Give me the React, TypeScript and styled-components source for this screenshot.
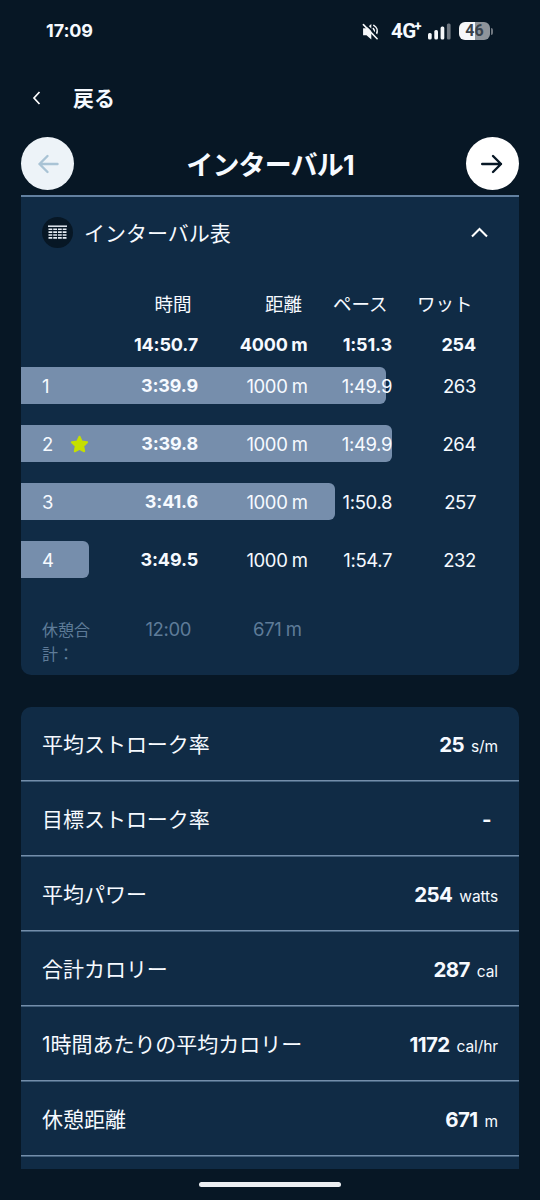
import React from "react";
import styled, { createGlobalStyle } from "styled-components";

const GlobalStyle = createGlobalStyle`
  * { box-sizing: border-box; }
  body {
    margin: 0;
    background: #071725;
    color: #f6faff;
    font-family: Inter, "Noto Sans CJK JP", sans-serif;
  }
`;

const Screen = styled.div`
  width: 540px;
  height: 1200px;
  overflow: hidden;
  display: flex;
  flex-direction: column;
`;

const StatusBar = styled.header`
  height: 60px;
  flex: none;
  padding: 1px 46px 0;
  display: flex;
  align-items: center;
  justify-content: space-between;
`;

const Clock = styled.span`
  font-size: 18px;
  font-weight: 700;
  letter-spacing: -0.1px;
`;

const StatusIcons = styled.div`
  display: flex;
  align-items: center;
  padding-top: 1px;
`;

const Network = styled.span`
  display: flex;
  align-items: flex-start;
  font: 700 20.5px/20px Roboto, sans-serif;
  letter-spacing: -0.6px;
  margin-left: 12px;
  width: 30px;
`;

const Plus = styled.sup`
  font: 900 13px/10px Roboto, sans-serif;
  margin-left: -1px;
`;

const Signal = styled.svg`
  margin-left: 7px;
`;

const Battery = styled.span`
  width: 31px;
  height: 18px;
  margin-left: 8px;
  border-radius: 6px;
  background: linear-gradient(90deg, #f5f7f9 50%, #8e949b 50%);
  color: #39424b;
  font: 700 16px/18px Roboto, sans-serif;
  text-align: center;
`;

const BatteryCap = styled.span`
  width: 2px;
  height: 7px;
  margin: 0 1px;
  border-radius: 0 2px 2px 0;
  background: #6f7780;
`;

const BackBar = styled.nav`
  height: 72px;
  flex: none;
  padding: 3px 0 0 32px;
  display: flex;
  align-items: center;
  gap: 32px;
`;

const BackLabel = styled.span`
  font-size: 21px;
  line-height: 30px;
  font-weight: 700;
  padding-top: 2px;
`;

const TitleBar = styled.div`
  height: 63px;
  flex: none;
  padding: 0 21px;
  display: flex;
  align-items: center;
  justify-content: space-between;
`;

const RoundButton = styled.button<{ $dim?: boolean }>`
  width: 53px;
  height: 53px;
  padding: 0;
  border: 0;
  border-radius: 50%;
  display: grid;
  place-items: center;
  background: ${(p) => (p.$dim ? "#edf3f8" : "#ffffff")};
  color: ${(p) => (p.$dim ? "#a9c3d5" : "#071725")};
`;

const Title = styled.h1`
  margin: 0;
  padding-top: 5px;
  font-size: 27px;
  line-height: 40px;
  font-weight: 700;
  letter-spacing: -0.85px;
`;

const IntervalCard = styled.section`
  flex: none;
  height: 480px;
  margin: 0 21px;
  background: #102b45;
  border-top: 2px solid #6280a0;
  border-radius: 0 0 10px 10px;
  display: flex;
  flex-direction: column;
`;

const CardHeader = styled.div`
  height: 70px;
  padding: 0 31px 0 21px;
  display: flex;
  align-items: center;
`;

const TableBadge = styled.span`
  width: 31px;
  height: 31px;
  border-radius: 50%;
  background: #071725;
  display: grid;
  place-items: center;
  margin-right: 11px;
`;

const CardTitle = styled.h2`
  flex: 1;
  margin: 0;
  padding-top: 3px;
  font-size: 21px;
  font-weight: 400;
  line-height: 30px;
`;

const Columns = styled.div<{ $height: number }>`
  height: ${(p) => p.$height}px;
  display: grid;
  grid-template-columns: 87px 90px 109.5px 84.5px 84px;
  align-items: center;
`;

const HeadRow = styled(Columns)`
  padding-top: 6px;
`;

const HeadCell = styled.span<{ $inset: number }>`
  text-align: right;
  white-space: nowrap;
  font-size: 18.5px;
  padding-right: ${(p) => p.$inset}px;
`;

const Cell = styled.span<{ $bold?: boolean }>`
  text-align: right;
  white-space: nowrap;
  font-size: ${(p) => (p.$bold ? 18 : 18.5)}px;
  font-weight: ${(p) => (p.$bold ? 700 : 370)};
  letter-spacing: ${(p) => (p.$bold ? -0.15 : -0.38)}px;
  word-spacing: -0.6px;
`;

const IndexCell = styled.span`
  padding-left: 21px;
  display: flex;
  align-items: center;
  font-size: 18.5px;
  font-weight: 370;
`;

const IndexNumber = styled.span`
  width: 28px;
`;

const Rows = styled.div`
  margin-top: 12px;
  display: flex;
  flex-direction: column;
  gap: 21px;
`;

const BarRow = styled(Columns)<{ $bar: number }>`
  isolation: isolate;
  position: relative;

  &::before {
    content: "";
    position: absolute;
    z-index: -1;
    inset: 0 auto 0 0;
    width: ${(p) => p.$bar}px;
    border-radius: 0 6px 6px 0;
    background: #768eac;
  }
`;

const RestRow = styled(Columns)`
  margin-top: 39px;
  align-items: start;
  color: #5e7b98;
`;

const RestLabel = styled.span`
  padding: 1px 0 0 21px;
  width: 72px;
  font-size: 16px;
  line-height: 24px;
`;

const RestValue = styled(Cell)<{ $inset: number }>`
  line-height: 24px;
  padding-right: ${(p) => p.$inset}px;
`;

const StatsCard = styled.section`
  height: 462px;
  flex: none;
  margin: 32px 21px 0;
  overflow: hidden;
  background: #102b45;
  border-radius: 10px 10px 0 0;
`;

const StatRow = styled.div`
  height: 75px;
  padding: 0 21px;
  border-bottom: 1px solid #42607d;
  box-shadow: inset 0 -1px #748eaa;
  display: flex;
  align-items: center;
  justify-content: space-between;
`;

const StatLabel = styled.span`
  font-size: 21px;
  line-height: 30px;
  letter-spacing: -0.03px;
  padding-top: 1px;
`;

const StatValue = styled.span`
  display: flex;
  align-items: baseline;
  gap: 7px;
  padding-top: 1px;
`;

const Value = styled.strong`
  font-size: 20.5px;
  font-weight: 700;
  letter-spacing: -0.6px;
`;

const Unit = styled.span`
  font-size: 15.5px;
  font-weight: 370;
  letter-spacing: -0.1px;
`;

const HomeArea = styled.footer`
  flex: 1;
  display: flex;
  justify-content: center;
  padding-top: 13px;
`;

const HomeIndicator = styled.span`
  width: 142px;
  height: 5px;
  border-radius: 3px;
  background: #eceff2;
`;

const intervals = [
  { n: 1, time: "3:39.9", pace: "1:49.9", watt: 263, bar: 365 },
  { n: 2, time: "3:39.8", pace: "1:49.9", watt: 264, bar: 371, best: true },
  { n: 3, time: "3:41.6", pace: "1:50.8", watt: 257, bar: 313.5 },
  { n: 4, time: "3:49.5", pace: "1:54.7", watt: 232, bar: 67.5 },
];

const stats = [
  { label: "平均ストローク率", value: "25", unit: "s/m" },
  { label: "目標ストローク率", value: "-", unit: "" },
  { label: "平均パワー", value: "254", unit: "watts" },
  { label: "合計カロリー", value: "287", unit: "cal" },
  { label: "1時間あたりの平均カロリー", value: "1172", unit: "cal/hr" },
  { label: "休憩距離", value: "671", unit: "m" },
];

const Arrow = ({ left }: { left?: boolean }) => (
  <svg width="22" height="20" viewBox="0 0 22 20" fill="none" stroke="currentColor" strokeWidth="2.4" strokeLinecap="round" strokeLinejoin="round">
    <path d={left ? "M20.5 10H2.5M10.5 2L2.5 10l8 8" : "M1.2 10H20M12 2l8 8-8 8"} />
  </svg>
);

const MuteIcon = () => (
  <svg width="17" height="17" viewBox="0 0 18 18" fill="none" stroke="#f5f7f9" strokeWidth="1.7" strokeLinecap="round">
    <path d="M2 6.500h3l4-3.500v12.500l-4-3.500H2z" fill="#f5f7f9" />
    <path d="M12 6c1.200 1.200 1.300 2.700.8 4M12.500 2.500c3.500 2 4.500 6 2.700 9.500" />
    <path d="M3 .4l15 15" stroke="#071725" strokeWidth="2" />
    <path d="M1.500 1.700l14.500 15" />
  </svg>
);

export default function App() {
  return (
    <Screen>
      <GlobalStyle />
      <StatusBar>
        <Clock>17:09</Clock>
        <StatusIcons>
          <MuteIcon />
          <Network>4G<Plus>+</Plus></Network>
          <Signal width="23" height="17" viewBox="0 0 23 17" fill="#f5f7f9">
            <rect x="0" y="10" width="3.7" height="6.5" rx="1.5" />
            <rect x="6.3" y="7" width="3.7" height="9.5" rx="1.5" />
            <rect x="12.6" y="3.5" width="3.7" height="13" rx="1.5" />
            <rect x="18.9" y="0.5" width="3.7" height="16" rx="1.5" fill="#6f7780" />
          </Signal>
          <Battery>46</Battery>
          <BatteryCap />
        </StatusIcons>
      </StatusBar>
      <BackBar>
        <svg width="9" height="14" viewBox="0 0 9 14" fill="none" stroke="#fff" strokeWidth="1.7">
          <path d="M7.5 1L2 7l5.500 6" />
        </svg>
        <BackLabel>戻る</BackLabel>
      </BackBar>
      <TitleBar>
        <RoundButton $dim aria-label="前へ"><Arrow left /></RoundButton>
        <Title>インターバル1</Title>
        <RoundButton aria-label="次へ"><Arrow /></RoundButton>
      </TitleBar>
      <IntervalCard>
        <CardHeader>
          <TableBadge>
            <svg width="19" height="14" viewBox="0 0 19 14" stroke="#e6edf4" fill="none">
              <path d="M0 1.200h19" strokeWidth="1.5" />
              <path d="M.5 4.200h18M.5 7.100h18M.5 10h18M.5 12.900h18" strokeWidth="1.6" strokeDasharray="3.8 .93" />
            </svg>
          </TableBadge>
          <CardTitle>インターバル表</CardTitle>
          <svg width="17" height="11" viewBox="0 0 17 11" fill="none" stroke="#fff" strokeWidth="2.1">
            <path d="M1 9.500l7.500-7.500L16 9.500" />
          </svg>
        </CardHeader>
        <HeadRow $height={66}>
          <span />
          <HeadCell $inset={6.5}>時間</HeadCell>
          <HeadCell $inset={5.5}>距離</HeadCell>
          <HeadCell $inset={4.5}>ペース</HeadCell>
          <HeadCell $inset={3.5}>ワット</HeadCell>
        </HeadRow>
        <Columns $height={22}>
          <span />
          <Cell $bold>14:50.7</Cell>
          <Cell $bold>4000 m</Cell>
          <Cell $bold>1:51.3</Cell>
          <Cell $bold>254</Cell>
        </Columns>
        <Rows>
          {intervals.map((r) => (
            <BarRow key={r.n} $height={37} $bar={r.bar}>
              <IndexCell>
                <IndexNumber>{r.n}</IndexNumber>
                {r.best && (
                  <svg width="19" height="18" viewBox="0 0 19 18" fill="#c5df00" stroke="#c5df00" strokeWidth="2" strokeLinejoin="round">
                    <path d="M9.500 1.700l2.300 4.900 5.300.7-3.900 3.700 1 5.300-4.700-2.400-4.700 2.400 1-5.300-3.900-3.700 5.300-.7z" />
                  </svg>
                )}
              </IndexCell>
              <Cell $bold>{r.time}</Cell>
              <Cell>1000 m</Cell>
              <Cell>{r.pace}</Cell>
              <Cell>{r.watt}</Cell>
            </BarRow>
          ))}
        </Rows>
        <RestRow $height={50}>
          <RestLabel>休憩合計：</RestLabel>
          <RestValue $inset={7}>12:00</RestValue>
          <RestValue $inset={6}>671 m</RestValue>
        </RestRow>
      </IntervalCard>
      <StatsCard>
        {stats.map((s) => (
          <StatRow key={s.label}>
            <StatLabel>{s.label}</StatLabel>
            <StatValue>
              <Value>{s.value}</Value>
              <Unit>{s.unit}</Unit>
            </StatValue>
          </StatRow>
        ))}
      </StatsCard>
      <HomeArea><HomeIndicator /></HomeArea>
    </Screen>
  );
}
